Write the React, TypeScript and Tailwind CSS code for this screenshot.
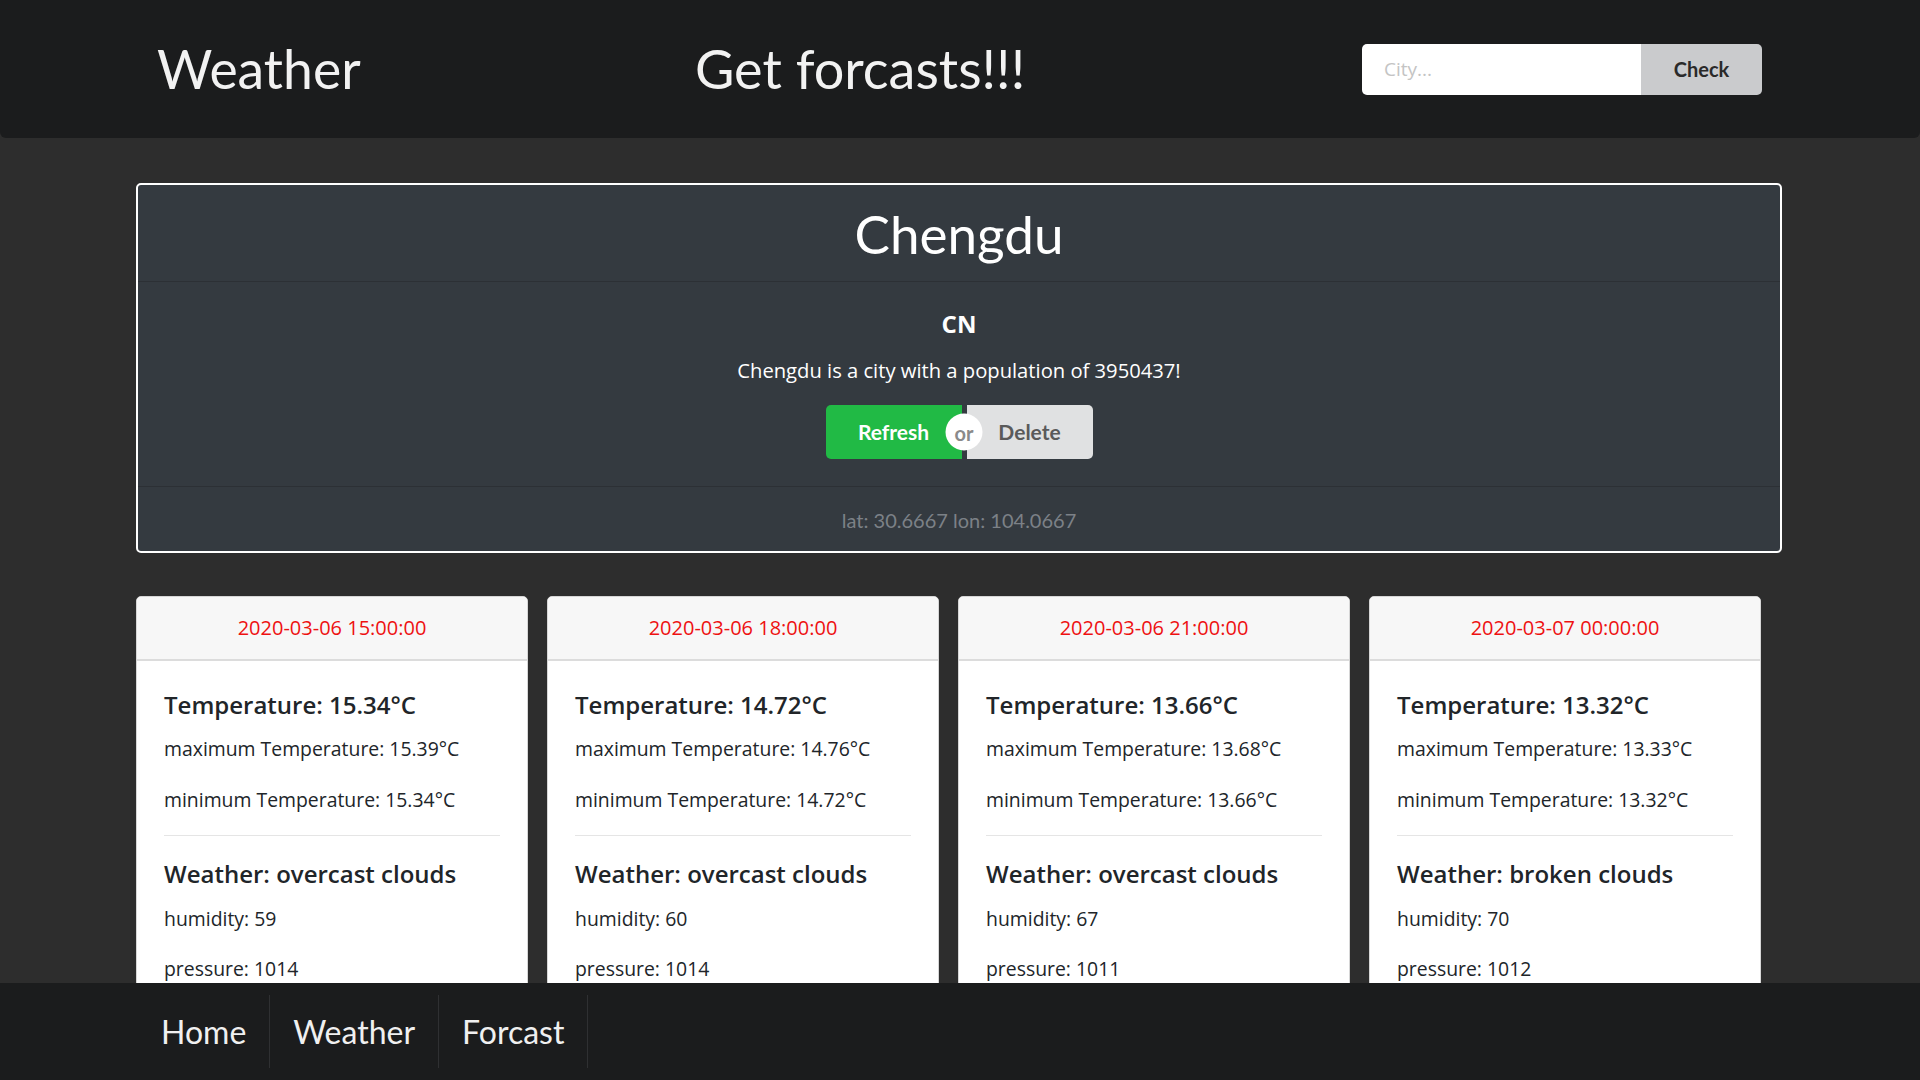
import React from "react";

const forecasts = [
  { date: "2020-03-06 15:00:00", temp: "15.34", max: "15.39", min: "15.34", weather: "overcast clouds", humidity: 59, pressure: 1014 },
  { date: "2020-03-06 18:00:00", temp: "14.72", max: "14.76", min: "14.72", weather: "overcast clouds", humidity: 60, pressure: 1014 },
  { date: "2020-03-06 21:00:00", temp: "13.66", max: "13.68", min: "13.66", weather: "overcast clouds", humidity: 67, pressure: 1011 },
  { date: "2020-03-07 00:00:00", temp: "13.32", max: "13.33", min: "13.32", weather: "broken clouds", humidity: 70, pressure: 1012 },
];

const lato = "font-['Lato','Liberation_Sans',sans-serif]";
const body = "font-['Open_Sans','Noto_Sans',sans-serif]";

export default function App() {
  return (
    <div className="h-screen w-full overflow-hidden bg-[#2d2d2d]">
      {/* Header */}
      <header className="flex h-[138px] items-center rounded-b-md bg-[#1b1c1d] pl-[157px] pr-[158px]">
        <div className={`${lato} w-[538px] text-[53.5px] leading-none text-[#f2f2f2]`}>Weather</div>
        <div className={`${lato} flex-1 text-[54px] leading-none text-[#f2f2f2]`}>Get forcasts!!!</div>
        <div className="flex h-[51px] w-[400px] overflow-hidden rounded-[5px]">
          <input
            placeholder="City..."
            className={`${body} h-full w-[279px] bg-white pl-[22px] text-[19px] text-[#333] outline-none placeholder:text-[#c4c4c4]`}
          />
          <button className={`${lato} flex-1 bg-[#cacbcd] text-[20px] font-bold text-[#2a2a2a]`}>Check</button>
        </div>
      </header>

      <main className="ml-[136px] w-[1646px] pt-[45px]">
        {/* City card */}
        <section className="rounded-[5px] border-2 border-white bg-[#343a40]">
          <div className={`${lato} flex h-[97px] items-center justify-center border-b border-[#2c3035] text-[53px] leading-none text-white`}>
            Chengdu
          </div>
          <div className="flex flex-col items-center border-b border-[#2c3035] pb-[27px] pt-[27px]">
            <div className={`${body} text-[24px] font-bold leading-[30px] text-white`}>CN</div>
            <p className={`${body} mt-[16px] text-[20.2px] leading-[30px] text-white`}>
              Chengdu is a city with a population of 3950437!
            </p>
            <div className="mt-[20px] flex h-[54px]">
              <button className={`${lato} h-full w-[136px] rounded-l-[5px] bg-[#21ba45] text-[21px] font-bold text-white`}>
                Refresh
              </button>
              <div className="relative w-[5px]">
                <span
                  className={`${lato} absolute left-1/2 top-1/2 flex h-[37px] w-[37px] -translate-x-1/2 -translate-y-1/2 items-center justify-center rounded-full bg-white text-[20px] font-bold text-[#8a8a8a]`}
                >
                  or
                </span>
              </div>
              <button className={`${lato} h-full w-[126px] rounded-r-[5px] bg-[#e0e1e2] text-[21px] font-bold text-[#5a5a5a]`}>
                Delete
              </button>
            </div>
          </div>
          <div className={`${lato} flex h-[64px] items-center justify-center pt-[1px] text-[20px] text-[#7c8187]`}>
            lat: 30.6667 lon: 104.0667
          </div>
        </section>

        {/* Forecast cards */}
        <div className="mt-[43px] grid w-[1625px] grid-cols-4 gap-[19px]">
          {forecasts.map((f) => (
            <div key={f.date} className="overflow-hidden rounded-[5px] border border-[#d6d6d6] bg-white">
              <div className={`${body} flex h-[64px] items-center justify-center border-b-2 border-[#dcdcdc] bg-[#f7f7f7] text-[20px] text-[#ee1111]`}>
                {f.date}
              </div>
              <div className={`${body} px-[27px] pb-[25px] pt-[29px] text-[#212529]`}>
                <h5 className="text-[24px] font-semibold leading-[30px]">Temperature: {f.temp}°C</h5>
                <p className="mt-[14px] text-[19.4px] leading-[30px]">maximum Temperature: {f.max}°C</p>
                <p className="mt-[21px] text-[19.4px] leading-[30px]">minimum Temperature: {f.min}°C</p>
                <hr className="mt-[20px] border-t border-[#e5e5e5]" />
                <h5 className="mt-[23px] text-[24px] font-semibold leading-[30px]">Weather: {f.weather}</h5>
                <p className="mt-[15px] text-[19.4px] leading-[30px]">humidity: {f.humidity}</p>
                <p className="mt-[20px] text-[19.4px] leading-[30px]">pressure: {f.pressure}</p>
              </div>
            </div>
          ))}
        </div>
      </main>

      {/* Footer menu */}
      <nav className="fixed bottom-0 left-0 right-0 flex h-[97px] items-center bg-[#1b1c1d] pl-[138px]">
        {["Home", "Weather", "Forcast"].map((item) => (
          <div
            key={item}
            className={`${lato} flex h-[73px] items-center border-r border-[#2f3032] px-[23px] text-[32px] text-[#f0f0f0]`}
          >
            {item}
          </div>
        ))}
      </nav>
    </div>
  );
}
